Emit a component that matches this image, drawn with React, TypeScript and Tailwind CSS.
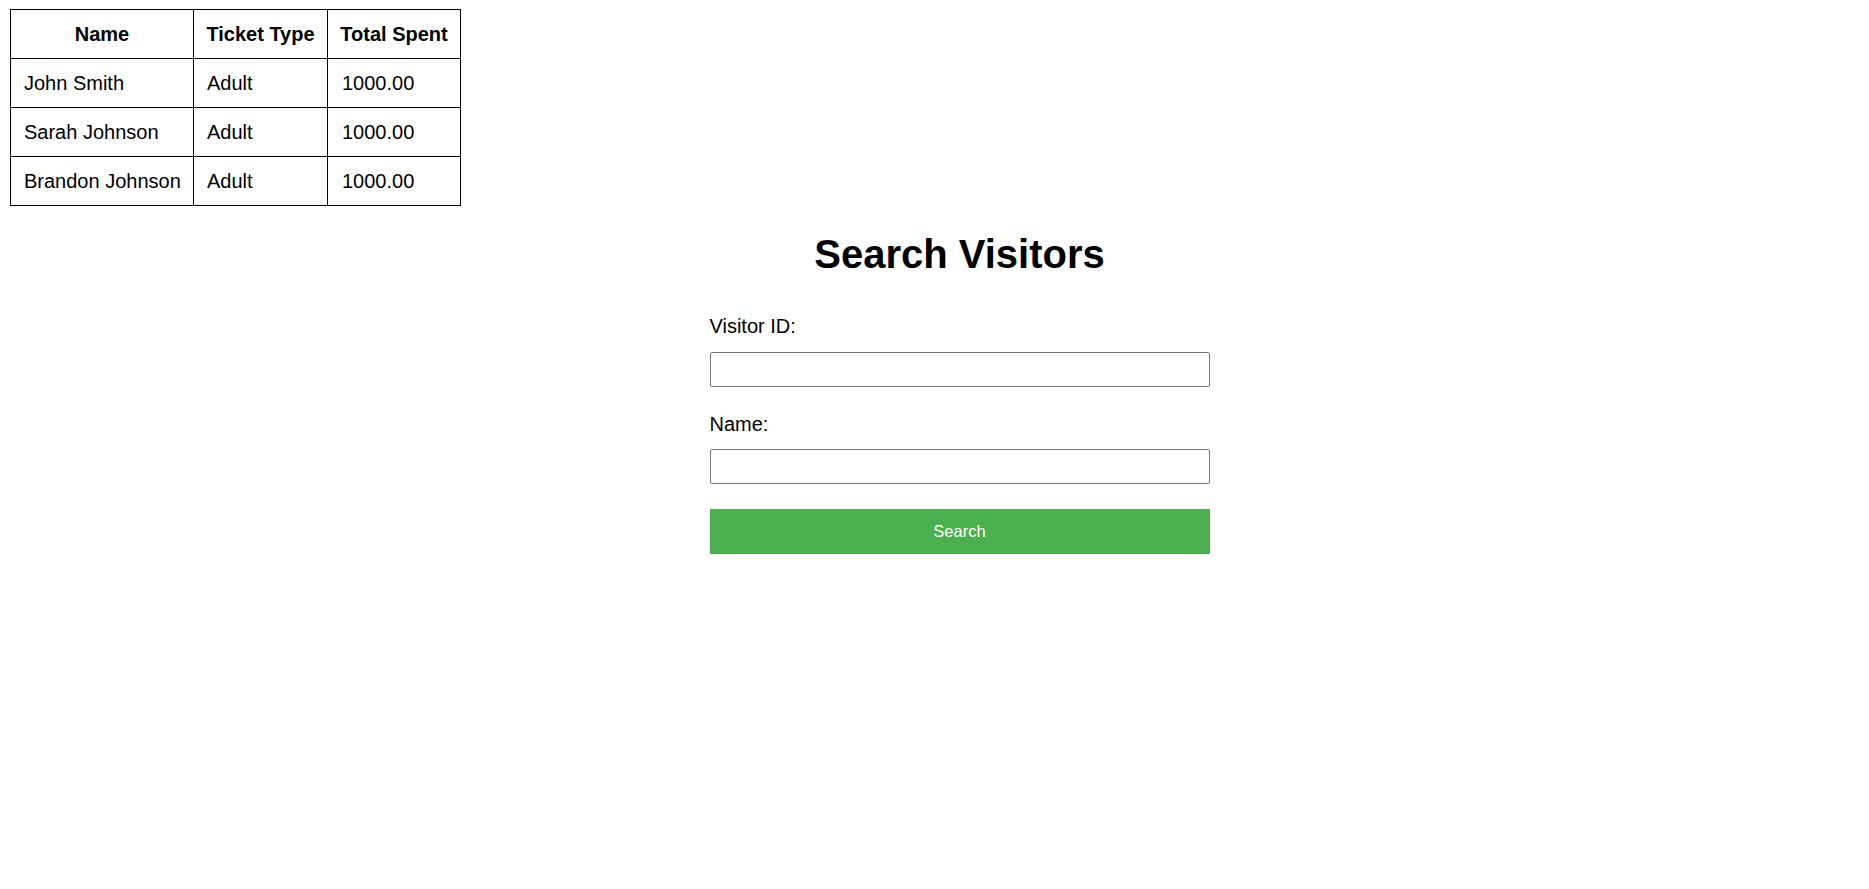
import React, { useState } from 'react';

type Visitor = {
  name: string;
  ticketType: string;
  totalSpent: string;
};

const visitors: Visitor[] = [
  { name: 'John Smith', ticketType: 'Adult', totalSpent: '1000.00' },
  { name: 'Sarah Johnson', ticketType: 'Adult', totalSpent: '1000.00' },
  { name: 'Brandon Johnson', ticketType: 'Adult', totalSpent: '1000.00' },
];

export default function App() {
  const [visitorId, setVisitorId] = useState('');
  const [name, setName] = useState('');

  return (
    <div className="min-h-screen bg-white text-black font-['Liberation_Sans',Arial,sans-serif]">
      <table className="mt-[9px] ml-[10px] border-collapse table-fixed w-[450px] text-[20px]">
        <colgroup>
          <col className="w-[183px]" />
          <col className="w-[134px]" />
          <col className="w-[133px]" />
        </colgroup>
        <thead>
          <tr>
            <th className="border border-black py-3 leading-[24px] font-bold text-center">Name</th>
            <th className="border border-black py-3 leading-[24px] font-bold text-center">Ticket Type</th>
            <th className="border border-black py-3 leading-[24px] font-bold text-center whitespace-nowrap">Total Spent</th>
          </tr>
        </thead>
        <tbody>
          {visitors.map((v) => (
            <tr key={v.name}>
              <td className="border border-black py-3 pl-[13px] leading-[24px] whitespace-nowrap">{v.name}</td>
              <td className="border border-black py-3 pl-[13px] leading-[24px]">{v.ticketType}</td>
              <td className="border border-black py-3 pl-[14px] leading-[24px]">{v.totalSpent}</td>
            </tr>
          ))}
        </tbody>
      </table>

      <div className="flex justify-center pl-[50px]">
        <div className="w-[500px] flex flex-col">
          <h1 className="mt-[25px] text-center text-[40px] leading-[46px] font-bold">Search Visitors</h1>
          <form
            className="flex flex-col"
            onSubmit={(e) => {
              e.preventDefault();
            }}
          >
            <label htmlFor="visitorId" className="mt-[38px] text-[20px] leading-[23px]">
              Visitor ID:
            </label>
            <input
              id="visitorId"
              type="text"
              value={visitorId}
              onChange={(e) => setVisitorId(e.target.value)}
              className="mt-[14px] h-[35px] w-full border border-[#767676] rounded-[2px] px-2 text-[16px] outline-none"
            />
            <label htmlFor="name" className="mt-[26px] text-[20px] leading-[23px]">
              Name:
            </label>
            <input
              id="name"
              type="text"
              value={name}
              onChange={(e) => setName(e.target.value)}
              className="mt-[13px] h-[35px] w-full border border-[#767676] rounded-[2px] px-2 text-[16px] outline-none"
            />
            <button
              type="submit"
              className="mt-[25px] h-[45px] w-full bg-[#4caf50] text-white text-[16.5px] cursor-pointer"
            >
              Search
            </button>
          </form>
        </div>
      </div>
    </div>
  );
}
